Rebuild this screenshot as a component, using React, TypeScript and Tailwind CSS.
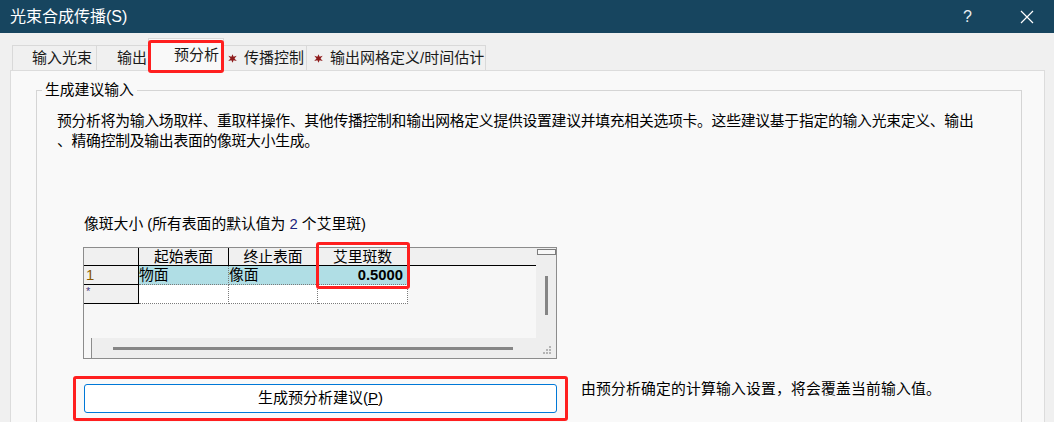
import React from "react";

const cjk = "font-['Liberation_Sans','Noto_Sans_CJK_SC',sans-serif]";

function Star() {
  return (
    <svg width="9" height="9" viewBox="0 0 8 8" className="shrink-0">
      <path
        d="M4 0.2 L5 2.4 L7.7 1.6 L5.8 3.9 L7.8 6.2 L5 5.5 L4 7.8 L3 5.5 L0.2 6.2 L2.2 3.9 L0.3 1.6 L3 2.4 Z"
        fill="#8e1b1b"
      />
    </svg>
  );
}

function Tab({
  label,
  width,
  star,
  selected,
  pl,
}: {
  label: string;
  width: number;
  star?: boolean;
  selected?: boolean;
  pl: number;
}) {
  if (selected) {
    return (
      <div
        className="relative z-10 -mx-[2px] flex h-[33px] items-center border border-b-0 border-[#d9d9d9] bg-[#f9f9f9] text-[15px] text-[#1a1a1a]"
        style={{ width, paddingLeft: pl }}
      >
        {label}
        <div className="absolute -left-[1px] -right-[1px] top-[1px] bottom-[-2px] rounded-[3px] border-[3px] border-[#ff1f1f]" />
      </div>
    );
  }
  return (
    <div
      className="flex h-[26px] items-center gap-[7px] border border-b-0 border-l-0 border-[#d9d9d9] bg-[#f0f0f0] text-[15px] text-[#1a1a1a] first:border-l"
      style={{ width, paddingLeft: pl }}
    >
      {star && <Star />}
      {label}
    </div>
  );
}

function Cell({
  children,
  className = "",
}: {
  children?: React.ReactNode;
  className?: string;
}) {
  return <div className={`h-full ${className}`}>{children}</div>;
}

export default function App() {
  return (
    <div className={`flex h-[422px] w-[1054px] flex-col overflow-hidden bg-[#f0f0f0] ${cjk}`}>
      {/* title bar */}
      <div className="flex h-[33px] shrink-0 items-center bg-[#17455f] pl-[10px] text-white">
        <span className="text-[16px]">光束合成传播(S)</span>
        <span className="ml-auto mr-[48px] text-[16px] text-[#e8eef2]">?</span>
        <svg width="14" height="14" viewBox="0 0 14 14" className="mr-[20px]">
          <path d="M1 1 L13 13 M13 1 L1 13" stroke="#ffffff" strokeWidth="1.2" />
        </svg>
      </div>

      <div className="flex flex-1 flex-col pl-[10px] pt-[5px]">
        {/* tabs */}
        <div className="flex items-end pl-[2px]">
          <Tab label="输入光束" width={85} pl={19} />
          <Tab label="输出" width={53} pl={20} />
          <Tab label="预分析" width={76} pl={25} selected />
          <Tab label="传播控制" width={85} pl={6} star />
          <Tab label="输出网格定义/时间估计" width={179} pl={7} star />
        </div>

        {/* tab page */}
        <div className="-mt-[1px] w-[1035px] flex-1 border border-[#dcdcdc] bg-[#f9f9f9] pl-[25px] pt-[10px]">
          <fieldset className="h-[400px] w-[986px] border border-[#d5d5d5]">
            <legend className="ml-[5px] px-[3px] text-[14.8px] leading-[18px] text-black">
              生成建议输入
            </legend>
            <div className="pl-[20px] pt-[12px]">
              <p className="text-[14.8px] leading-[20px] text-black">
                <span className="block whitespace-nowrap tracking-[-0.25px]">
                  预分析将为输入场取样、重取样操作、其他传播控制和输出网格定义提供设置建议并填充相关选项卡。这些建议基于指定的输入光束定义、输出
                </span>
                <span className="block tracking-[-0.25px]">、精确控制及输出表面的像斑大小生成。</span>
              </p>

              <div className="mt-[63px] pl-[27px] text-[14.8px] leading-[20px] text-black">
                像斑大小 (所有表面的默认值为 <span className="text-[#1a237e]">2</span> 个艾里斑)
              </div>

              {/* grid */}
              <div className="relative ml-[26px] mt-[13px] flex h-[112px] w-[474px] flex-col border border-[#8c8c8c] bg-[#eeeeee]">
                <div className="flex flex-1">
                  <div className="flex-1 bg-[#f7f7f7] text-[14.8px] leading-[18px]">
                    <div className="grid h-[18px] grid-cols-[55px_90px_89px_90px] border-b border-black bg-[#f0f0f0]">
                      <Cell className="border-r border-black" />
                      <Cell className="border-r border-black text-center">起始表面</Cell>
                      <Cell className="border-r border-black text-center">终止表面</Cell>
                      <Cell className="border-r border-black text-center">艾里斑数</Cell>
                    </div>
                    <div className="grid h-[19px] grid-cols-[55px_90px_89px_90px]">
                      <Cell className="border-b border-r border-black bg-[#f0f0f0] pl-[2px] text-[#8a5a00]">1</Cell>
                      <Cell className="border-b border-r border-dotted border-[#7a7a7a] bg-[#b0dee5]">物面</Cell>
                      <Cell className="border-b border-r border-dotted border-[#7a7a7a] bg-[#b0dee5]">像面</Cell>
                      <Cell className="border-b border-r border-dotted border-[#7a7a7a] bg-[#b0dee5] pr-[4px] text-right font-bold">
                        0.5000
                      </Cell>
                    </div>
                    <div className="grid h-[19px] grid-cols-[55px_90px_89px_90px]">
                      <Cell className="border-b border-r border-black bg-[#f0f0f0] pl-[2px] text-[11px] leading-[12px] text-[#4a3a80]">*</Cell>
                      <Cell className="border-b border-r border-dotted border-[#7a7a7a] bg-white" />
                      <Cell className="border-b border-r border-dotted border-[#7a7a7a] bg-white" />
                      <Cell className="border-b border-r border-dotted border-[#7a7a7a] bg-white" />
                    </div>
                  </div>
                  {/* vertical scrollbar */}
                  <div className="flex w-[20px] flex-col items-center">
                    <div className="mt-[1px] h-[6px] w-[19px] border border-[#7d7d7d] bg-[#f7f7f7]" />
                    <div className="mt-[21px] h-[39px] w-[3px] bg-[#858585]" />
                  </div>
                </div>
                {/* horizontal scrollbar */}
                <div className="flex h-[20px] items-center">
                  <div className="h-[20px] w-[8px] border-r border-[#8c8c8c] bg-[#f7f7f7]" />
                  <div className="ml-[21px] h-[3px] w-[400px] bg-[#858585]" />
                  <svg width="10" height="10" viewBox="0 0 10 10" className="ml-auto mr-[4px] mt-[4px]">
                    <rect x="7" y="1" width="2" height="2" fill="#b4b4b4" />
                    <rect x="4" y="4" width="2" height="2" fill="#b4b4b4" />
                    <rect x="7" y="4" width="2" height="2" fill="#b4b4b4" />
                    <rect x="1" y="7" width="2" height="2" fill="#b4b4b4" />
                    <rect x="4" y="7" width="2" height="2" fill="#b4b4b4" />
                    <rect x="7" y="7" width="2" height="2" fill="#b4b4b4" />
                  </svg>
                </div>
                {/* highlight */}
                <div className="absolute left-[232px] top-[-6px] h-[47px] w-[94px] rounded-[3px] border-[3px] border-[#ff1f1f]" />
              </div>

              {/* button row */}
              <div className="mt-[25px] flex items-center">
                <div className="relative ml-[27px]">
                  <button
                    type="button"
                    className="h-[29px] w-[473px] rounded-[3px] border border-[#0078d7] bg-white text-[15px] text-black"
                  >
                    生成预分析建议(<span className="underline">P</span>)
                  </button>
                  <div className="absolute -left-[11px] -right-[11px] -top-[8px] -bottom-[8px] rounded-[3px] border-[3px] border-[#ff1f1f]" />
                </div>
                <span className="-mt-[18px] ml-[24px] text-[14.8px] tracking-[0.2px] text-black">
                  由预分析确定的计算输入设置，将会覆盖当前输入值。
                </span>
              </div>
            </div>
          </fieldset>
        </div>
      </div>
    </div>
  );
}
